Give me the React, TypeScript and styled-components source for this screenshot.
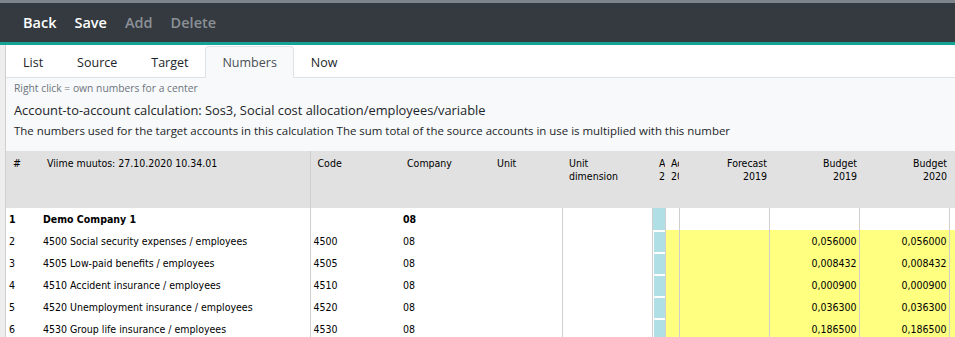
import React from "react";
import styled, { createGlobalStyle } from "styled-components";

const GlobalStyle = createGlobalStyle`
  html, body { margin: 0; padding: 0; background: #ffffff; overflow: hidden; }
  body { font-family: "Open Sans", "Noto Sans", sans-serif; color: #212529; }
`;

const Page = styled.div`
  width: 955px;
  height: 337px;
  display: flex;
  flex-direction: column;
  overflow: hidden;
`;

const TopStrip = styled.div`
  height: 3px;
  background: #7d848b;
  flex: none;
`;

const Toolbar = styled.div`
  height: 39px;
  background: #343a40;
  display: flex;
  align-items: center;
  padding-left: 23px;
  gap: 18px;
  flex: none;
`;

const ToolButton = styled.span<{ $disabled?: boolean }>`
  font-size: 14.5px;
  font-weight: 600;
  color: ${(p) => (p.$disabled ? "#8b9096" : "#ffffff")};
`;

const Accent = styled.div`
  height: 3px;
  background: #16a397;
  flex: none;
`;

const Body = styled.div`
  flex: 1;
  display: flex;
  min-height: 0;
`;

const Gutter = styled.div`
  width: 5px;
  background: #eeeeee;
  border-right: 1px solid #cfcfcf;
  flex: none;
`;

const Main = styled.div`
  flex: 1;
  min-width: 0;
  display: flex;
  flex-direction: column;
  overflow: hidden;
`;

const Tabs = styled.div`
  height: 33px;
  display: flex;
  align-items: flex-end;
  border-bottom: 1px solid #dee2e6;
  box-sizing: border-box;
  flex: none;
`;

const Tab = styled.div<{ $active?: boolean }>`
  height: 32px;
  box-sizing: border-box;
  padding: 0 16px;
  display: flex;
  align-items: center;
  font-size: 12.5px;
  color: ${(p) => (p.$active ? "#495057" : "#212529")};
  border: 1px solid ${(p) => (p.$active ? "#dee2e6" : "transparent")};
  border-bottom: none;
  border-radius: 4px 4px 0 0;
  background: ${(p) => (p.$active ? "#f8f9fa" : "transparent")};
  margin-bottom: -1px;
`;

const Info = styled.div`
  background: #f8f9fa;
  padding: 3px 8px 0 8px;
  height: 73px;
  box-sizing: border-box;
  flex: none;
`;

const Hint = styled.div`
  font-size: 10.3px;
  color: #6c757d;
  line-height: 14px;
`;

const Title = styled.div`
  font-size: 12.85px;
  line-height: 18px;
  margin-top: 6px;
`;

const Desc = styled.div`
  font-size: 11.45px;
  line-height: 16px;
  margin-top: 4px;
`;

const Grid = styled.table`
  border-collapse: collapse;
  table-layout: fixed;
  width: 1000px;
  font-family: "DejaVu Sans Condensed", "DejaVu Sans", sans-serif;
  font-size: 10.5px;
  color: #000;
`;

const HeadCell = styled.th<{ $right?: boolean; $sep?: boolean; $tight?: boolean }>`
  background: #e1e1e1;
  height: 57px;
  box-sizing: border-box;
  vertical-align: top;
  font-weight: normal;
  text-align: ${(p) => (p.$right ? "right" : "left")};
  padding: 6px ${(p) => (p.$right ? "2px" : "0")} 0
    ${(p) => (p.$right ? "0" : p.$tight ? "6px" : "7px")};
  line-height: 13px;
  overflow: hidden;
  white-space: nowrap;
  border-left: ${(p) => (p.$sep ? "1px solid #cfcfcf" : "none")};
`;

type CellKind = "plain" | "yellow";

const Cell = styled.td<{ $right?: boolean; $line?: boolean; $kind?: CellKind; $bold?: boolean }>`
  height: 22px;
  box-sizing: border-box;
  padding: 0 ${(p) => (p.$right ? "2px" : "0")} 0 ${(p) => (p.$right ? "0" : "3px")};
  text-align: ${(p) => (p.$right ? "right" : "left")};
  font-weight: ${(p) => (p.$bold ? "bold" : "normal")};
  white-space: nowrap;
  overflow: hidden;
  border-left: ${(p) => (p.$line ? "1px solid #cfcfcf" : "none")};
  background: ${(p) => (p.$kind === "yellow" ? "#ffff80" : "#ffffff")};
`;

const TealCell = styled.td`
  padding: 0;
  height: 22px;
  border-left: 1px solid #cfcfcf;
  background: #ffffff;
`;

const TealBox = styled.div<{ $framed?: boolean }>`
  height: 22px;
  box-sizing: border-box;
  background: #b0dfe5;
  border-top: ${(p) => (p.$framed ? "2px solid #ffffff" : "none")};
  border-left: ${(p) => (p.$framed ? "1px solid #ffffff" : "none")};
`;

const cols = [34, 270, 90, 90, 72, 90, 13, 14, 90, 90, 90, 57];

const rows = [
  { n: "1", name: "Demo Company 1", code: "", co: "08", head: true, f: "", b19: "", b20: "" },
  { n: "2", name: "4500 Social security expenses / employees", code: "4500", co: "08", f: "", b19: "0,056000", b20: "0,056000" },
  { n: "3", name: "4505 Low-paid benefits / employees", code: "4505", co: "08", f: "", b19: "0,008432", b20: "0,008432" },
  { n: "4", name: "4510 Accident insurance / employees", code: "4510", co: "08", f: "", b19: "0,000900", b20: "0,000900" },
  { n: "5", name: "4520 Unemployment insurance / employees", code: "4520", co: "08", f: "", b19: "0,036300", b20: "0,036300" },
  { n: "6", name: "4530 Group life insurance / employees", code: "4530", co: "08", f: "", b19: "0,186500", b20: "0,186500" },
];

export default function App() {
  return (
    <>
      <GlobalStyle />
      <Page>
        <TopStrip />
        <Toolbar>
          <ToolButton>Back</ToolButton>
          <ToolButton>Save</ToolButton>
          <ToolButton $disabled>Add</ToolButton>
          <ToolButton $disabled>Delete</ToolButton>
        </Toolbar>
        <Accent />
        <Body>
          <Gutter />
          <Main>
            <Tabs>
              <Tab>List</Tab>
              <Tab>Source</Tab>
              <Tab>Target</Tab>
              <Tab $active>Numbers</Tab>
              <Tab>Now</Tab>
            </Tabs>
            <Info>
              <Hint>Right click = own numbers for a center</Hint>
              <Title>Account-to-account calculation: Sos3, Social cost allocation/employees/variable</Title>
              <Desc>
                The numbers used for the target accounts in this calculation The sum total of the source accounts in use is multiplied with this number
              </Desc>
            </Info>
            <Grid>
              <colgroup>
                {cols.map((w, i) => (
                  <col key={i} style={{ width: w }} />
                ))}
              </colgroup>
              <thead>
                <tr>
                  <HeadCell>#</HeadCell>
                  <HeadCell>Viime muutos: 27.10.2020 10.34.01</HeadCell>
                  <HeadCell $sep>Code</HeadCell>
                  <HeadCell>Company</HeadCell>
                  <HeadCell>Unit</HeadCell>
                  <HeadCell>
                    Unit
                    <br />
                    dimension
                  </HeadCell>
                  <HeadCell>
                    A<br />2
                  </HeadCell>
                  <HeadCell $tight>
                    Ac
                    <br />
                    20
                  </HeadCell>
                  <HeadCell $right>
                    Forecast
                    <br />
                    2019
                  </HeadCell>
                  <HeadCell $right>
                    Budget
                    <br />
                    2019
                  </HeadCell>
                  <HeadCell $right>
                    Budget
                    <br />
                    2020
                  </HeadCell>
                  <HeadCell />
                </tr>
              </thead>
              <tbody>
                {rows.map((r) => {
                  const k: CellKind = r.head ? "plain" : "yellow";
                  return (
                    <tr key={r.n}>
                      <Cell $bold={r.head}>{r.n}</Cell>
                      <Cell $bold={r.head}>{r.name}</Cell>
                      <Cell $line>{r.code}</Cell>
                      <Cell $bold={r.head}>{r.co}</Cell>
                      <Cell />
                      <Cell $line />
                      <TealCell>
                        <TealBox $framed={!r.head} />
                      </TealCell>
                      <Cell $line $kind={k} />
                      <Cell $line $kind={k} $right>
                        {r.f}
                      </Cell>
                      <Cell $line $kind={k} $right>
                        {r.b19}
                      </Cell>
                      <Cell $line $kind={k} $right>
                        {r.b20}
                      </Cell>
                      <Cell $line $kind={k} />
                    </tr>
                  );
                })}
              </tbody>
            </Grid>
          </Main>
        </Body>
      </Page>
    </>
  );
}
